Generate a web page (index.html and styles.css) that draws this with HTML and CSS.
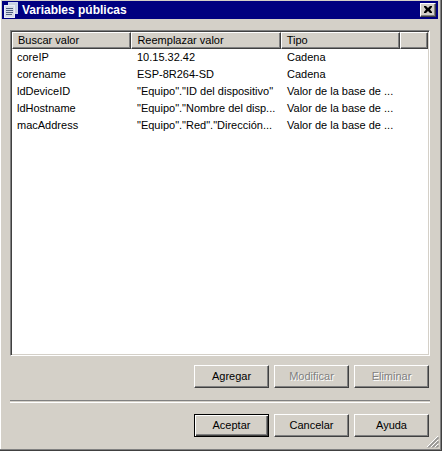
FILE: index.html
```html
<!DOCTYPE html>
<html>
<head>
<meta charset="utf-8">
<link rel="stylesheet" href="styles.css">
</head>
<body>
<div class="window">
  <div class="titlebar">
    <svg class="ticon" width="14" height="16" viewBox="0 0 14 16">
      <rect x="4.5" y="0.5" width="9" height="11" fill="#c8d0e0" stroke="#d0d8f0"/>
      <rect x="0.5" y="3.5" width="10" height="12" fill="#d8dce8" stroke="#e8ecf8"/>
      <path d="M2 6.5h7M2 8.5h7M2 10.5h7M2 12.5h6" stroke="#506080" stroke-width="1"/>
    </svg>
    <span class="title">Variables públicas</span>
    <div class="close">
      <svg width="8" height="7" viewBox="0 0 8 7"><path d="M0 0h2l2 2 2-2h2v1l-2 2.5 2 2.5v1h-2l-2-2-2 2h-2v-1l2-2.5-2-2.5z" fill="#000"/></svg>
    </div>
  </div>
  <div class="body">
    <div class="list">
      <div class="header">
        <div class="hcell c1">Buscar valor</div>
        <div class="hcell c2">Reemplazar valor</div>
        <div class="hcell c3">Tipo</div>
        <div class="hcell c4"></div>
      </div>
      <div class="row"><div class="cell c1">coreIP</div><div class="cell c2">10.15.32.42</div><div class="cell c3">Cadena</div></div>
      <div class="row"><div class="cell c1">corename</div><div class="cell c2">ESP-8R264-SD</div><div class="cell c3">Cadena</div></div>
      <div class="row"><div class="cell c1">ldDeviceID</div><div class="cell c2">"Equipo"."ID del dispositivo"</div><div class="cell c3">Valor de la base de ...</div></div>
      <div class="row"><div class="cell c1">ldHostname</div><div class="cell c2">"Equipo"."Nombre del disp...</div><div class="cell c3">Valor de la base de ...</div></div>
      <div class="row"><div class="cell c1">macAddress</div><div class="cell c2">"Equipo"."Red"."Dirección...</div><div class="cell c3">Valor de la base de ...</div></div>
    </div>
    <div class="btnrow first">
      <div class="btn">Agregar</div>
      <div class="btn disabled">Modificar</div>
      <div class="btn disabled">Eliminar</div>
    </div>
    <div class="sep"></div>
    <div class="btnrow second">
      <div class="btn default">Aceptar</div>
      <div class="btn">Cancelar</div>
      <div class="btn">Ayuda</div>
    </div>
  </div>
  <svg class="grip" width="12" height="12" viewBox="0 0 12 12">
    <path d="M11 0L0 11M11 4L4 11M11 8L8 11" stroke="#fff" stroke-width="1"/>
    <path d="M11.5 1L1 11.5M11.5 2L2 11.5M11.5 5L5 11.5M11.5 6L6 11.5M11.5 9L9 11.5M11.5 10L10 11.5" stroke="#808080" stroke-width="1"/>
  </svg>
</div>
</body>
</html>
```

FILE: styles.css
```css
html, body {
  margin: 0;
  padding: 0;
  background: #d4d0c8;
}
.window {
  position: relative;
  width: 442px;
  height: 451px;
  box-sizing: border-box;
  background: #d4d0c8;
  border-right: 1px solid #404040;
  border-bottom: 1px solid #404040;
  box-shadow: inset -1px -1px 0 #808080, inset 1px 0 0 #ffffff;
  padding: 1px 3px 2px 2px;
  font-family: "Liberation Sans", Arial, sans-serif;
  font-size: 11px;
  color: #000;
}
.titlebar {
  height: 18px;
  background: #000080;
  display: flex;
  align-items: center;
  color: #fff;
}
.ticon {
  margin-left: 2px;
  margin-right: 4px;
}
.title {
  font-weight: bold;
  font-size: 12px;
  flex: 1;
  white-space: nowrap;
}
.close {
  width: 16px;
  height: 14px;
  box-sizing: border-box;
  background: #d4d0c8;
  border-top: 1px solid #fff;
  border-left: 1px solid #fff;
  border-right: 1px solid #404040;
  border-bottom: 1px solid #404040;
  box-shadow: inset -1px -1px 0 #808080;
  display: flex;
  align-items: center;
  justify-content: center;
  margin-right: 2px;
}
.close svg { margin-top: -1px; margin-left: -1px; }
.body {
  padding: 11px 8px 0 8px;
  display: flex;
  flex-direction: column;
}
.list {
  height: 326px;
  box-sizing: border-box;
  background: #fff;
  border-top: 1px solid #808080;
  border-left: 1px solid #808080;
  border-right: 1px solid #fff;
  border-bottom: 1px solid #fff;
  box-shadow: inset 1px 1px 0 #404040, inset -1px -1px 0 #d4d0c8;
  padding: 1px;
}
.header {
  display: flex;
  height: 17px;
}
.hcell {
  box-sizing: border-box;
  height: 17px;
  background: #d4d0c8;
  border-top: 1px solid #fff;
  border-left: 1px solid #fff;
  border-right: 1px solid #404040;
  border-bottom: 1px solid #404040;
  box-shadow: inset -1px -1px 0 #808080;
  padding-left: 5px;
  line-height: 14px;
  white-space: nowrap;
  overflow: hidden;
}
.c1 { width: 120px; }
.c2 { width: 150px; }
.c3 { width: 120px; }
.c4 { width: 28px; }
.row {
  display: flex;
  height: 17px;
  line-height: 17px;
}
.cell {
  box-sizing: border-box;
  padding-left: 5px;
  white-space: nowrap;
  overflow: hidden;
}
.btnrow {
  display: flex;
  justify-content: flex-end;
  gap: 5px;
  padding-right: 1px;
}
.btnrow.first { margin-top: 9px; }
.btnrow.second { margin-top: 11px; }
.btn {
  width: 75px;
  height: 23px;
  box-sizing: border-box;
  background: #d4d0c8;
  border-top: 1px solid #fff;
  border-left: 1px solid #fff;
  border-right: 1px solid #404040;
  border-bottom: 1px solid #404040;
  box-shadow: inset -1px -1px 0 #808080;
  display: flex;
  align-items: center;
  justify-content: center;
  padding-bottom: 1px;
}
.btn.disabled {
  color: #808080;
  text-shadow: 1px 1px 0 #fff;
}
.btn.default {
  border: 1px solid #000;
  box-shadow: inset 1px 1px 0 #fff, inset -1px -1px 0 #404040, inset -2px -2px 0 #808080;
}
.sep {
  margin-top: 12px;
  height: 1px;
  border-top: 1px solid #808080;
  border-bottom: 1px solid #fff;
}
.grip {
  position: absolute;
  right: 2px;
  bottom: 2px;
}
```
